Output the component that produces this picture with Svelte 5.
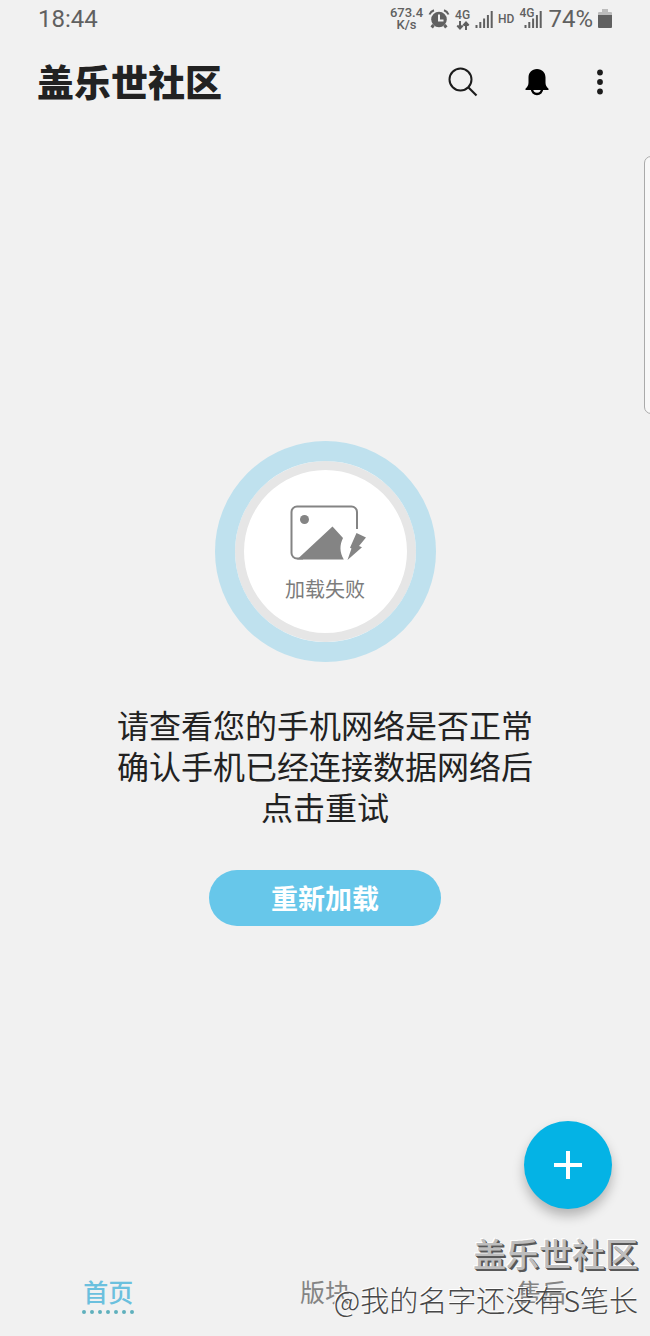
<script>
    const tabs = [
        { id: "home", label: "首页" },
        { id: "boards", label: "版块" },
        { id: "service", label: "售后" },
    ];

    const message = [
        "请查看您的手机网络是否正常",
        "确认手机已经连接数据网络后",
        "点击重试",
    ];

    let currentTab = $state("home");

    function selectTab(event, id) {
        event.preventDefault();
        currentTab = id;
    }
</script>

{#snippet signal()}
    <svg class="signal" width="18" height="18" viewBox="0 0 18 18" aria-hidden="true">
        <path d="M1.5 15v3M5.3 12v6M9.1 8.5v9.5M12.9 5v13M16.7 1v17" stroke="currentColor" stroke-width="2" />
    </svg>
{/snippet}

<div class="screen">
    <div class="status-bar">
        <time>18:44</time>
        <div class="status-icons">
            <span class="speed">673.4<br />K/s</span>
            <svg class="alarm" width="22" height="20" viewBox="0 0 22 20" aria-hidden="true">
                <circle cx="11" cy="10.5" r="7.8" fill="currentColor" />
                <path d="M5.5 16l-1.8 2.5M16.5 16l1.8 2.5" stroke="currentColor" stroke-width="3" />
                <path d="M1.5 5.5C2.3 3.5 3.7 2 6 1.2M20.5 5.5C19.7 3.5 18.3 2 16 1.2" stroke="currentColor" stroke-width="2" fill="none" />
                <path d="M11 5.5v6h4.5" stroke="#f1f1f1" stroke-width="2" fill="none" />
            </svg>
            <span class="network">
                <span class="generation">4G</span>
                <svg width="14" height="9" viewBox="0 0 13 9" aria-hidden="true">
                    <path d="M3.5 0v7M.8 4.5l2.700 3 2.700-3M9.500 9V2M6.800 4.500l2.700-3 2.700 3" stroke="currentColor" stroke-width="2" fill="none" />
                </svg>
            </span>
            {@render signal()}
            <span class="hd">HD</span>
            <span class="second-sim">
                <span class="generation">4G</span>
                {@render signal()}
            </span>
            <span class="percent">74%</span>
            <svg width="14" height="20" viewBox="0 0 14 20" aria-hidden="true">
                <path d="M4 0h6v3h3a1 1 0 0 1 1 1v4H0V4a1 1 0 0 1 1-1h3z" fill="#bcbcbc" />
                <path d="M0 6h14v12a1 1 0 0 1-1 1H1a1 1 0 0 1-1-1z" fill="currentColor" />
            </svg>
        </div>
    </div>

    <header>
        <h1>盖乐世社区</h1>
        <div class="actions">
            <button aria-label="搜索">
                <svg width="30" height="30" viewBox="0 0 30 30">
                    <circle cx="12.5" cy="12.5" r="11" fill="none" stroke="#1c1c1c" stroke-width="2" />
                    <path d="M20.5 20.5l8 8" stroke="#1c1c1c" stroke-width="2.2" />
                </svg>
            </button>
            <button aria-label="通知">
                <svg width="24" height="28" viewBox="0 0 24 28">
                    <circle cx="12" cy="21" r="5" fill="none" stroke="#000" stroke-width="2.5" />
                    <path d="M12 1c5.200 0 8.500 3.600 8.500 8.500v5c0 2.500.8 4 3 6.200V22H.5v-1.300c2.200-2.200 3-3.700 3-6.200v-5C3.500 4.600 6.800 1 12 1z" fill="#000" />
                </svg>
            </button>
            <button aria-label="更多">
                <svg width="8" height="26" viewBox="0 0 8 26">
                    <circle cx="4" cy="3.5" r="2.9" fill="#1c1c1c" />
                    <circle cx="4" cy="13" r="2.9" fill="#1c1c1c" />
                    <circle cx="4" cy="22.5" r="2.9" fill="#1c1c1c" />
                </svg>
            </button>
        </div>
    </header>

    <main>
        <div class="failure">
            <svg width="84" height="58" viewBox="-6 0 84 58" aria-hidden="true">
                <path d="M68 25V8a5.500 5.500 0 0 0-5.500-5.500H8A5.500 5.500 0 0 0 2.500 8v41A5.500 5.500 0 0 0 8 54.500h6" fill="none" stroke="#848484" stroke-width="2" />
                <circle cx="15.5" cy="15.5" r="4.500" fill="#848484" />
                <path d="M8 55.500L43.500 22.500 54 34c-3.500 7-3.500 14 .8 21.500z" fill="#848484" />
                <path d="M67.500 29L77 33.500 70 42l3 1.300L58.500 56l4-11.500-1.500-.7z" fill="#848484" />
            </svg>
            <span>加载失败</span>
        </div>
        <p class="message">
            {#each message as line}
                <span>{line}</span>
            {/each}
        </p>
        <button class="reload">重新加载</button>
    </main>

    <nav>
        {#each tabs as tab}
            <a
                href="#{tab.id}"
                class:active={currentTab === tab.id}
                onclick={(event) => selectTab(event, tab.id)}
            >
                <span>{tab.label}</span>
                <svg width="52" height="4" viewBox="0 0 52 4" aria-hidden="true">
                    <path d="M2 2h49" stroke="#5fb0bd" stroke-width="4" stroke-linecap="round" stroke-dasharray="0 8" />
                </svg>
            </a>
        {/each}
    </nav>

    <div class="edge-handle"></div>

    <button class="compose" aria-label="发帖">
        <svg width="28" height="28" viewBox="0 0 28 28">
            <path d="M14 0v28M0 14h28" stroke="#fff" stroke-width="4" />
        </svg>
    </button>

    <div class="watermark">
        <strong>盖乐世社区</strong>
        <span>@我的名字还没有S笔长</span>
    </div>
</div>

<style>
    :global(body) {
        margin: 0;
        background: #f1f1f1;
    }

    .screen {
        position: relative;
        display: flex;
        flex-direction: column;
        min-height: 100vh;
        overflow: hidden;
        background: #f1f1f1;
        color: #222;
        font-family: Roboto, "Noto Sans CJK SC", sans-serif;
    }

    button {
        display: flex;
        align-items: center;
        justify-content: center;
        padding: 0;
        border: none;
        background: none;
        font-family: inherit;
        cursor: pointer;
    }

    .status-bar {
        display: flex;
        align-items: center;
        justify-content: space-between;
        height: 38px;
        padding: 0 38px;
        color: #606060;
        font-size: 24px;
    }

    .status-icons {
        display: flex;
        align-items: center;
        gap: 5px;
    }

    .speed,
    .generation,
    .hd {
        font-size: 12px;
        font-weight: 500;
        line-height: 12px;
        text-align: center;
    }

    .speed {
        font-size: 13px;
    }

    .network {
        display: flex;
        flex-direction: column;
        align-items: center;
    }

    .second-sim {
        position: relative;
        display: flex;
        padding-left: 5px;
    }

    .second-sim .generation {
        position: absolute;
        top: -3px;
        left: 0;
    }

    .signal {
        display: block;
    }

    .percent {
        padding-left: 1px;
    }

    header {
        display: flex;
        align-items: center;
        justify-content: space-between;
        height: 88px;
        padding: 0 46px 0 37px;
    }

    h1 {
        margin: 0;
        padding-top: 6px;
        font-size: 37px;
        font-weight: 900;
        line-height: 48px;
    }

    .actions {
        display: flex;
        align-items: center;
        gap: 47px;
    }

    main {
        display: flex;
        flex: 1;
        flex-direction: column;
        align-items: center;
        justify-content: center;
    }

    .failure {
        display: flex;
        flex-direction: column;
        align-items: center;
        justify-content: center;
        gap: 14px;
        box-sizing: border-box;
        width: 221px;
        height: 221px;
        padding-top: 6px;
        border: 20px solid #bfe1ee;
        border-radius: 50%;
        background: #fff;
        box-shadow: inset 0 0 0 9px #e6e6e6;
        color: #7c7c7c;
        font-size: 20px;
        line-height: 28px;
    }

    .message {
        margin: 45px 0 40px;
        font-size: 32px;
        line-height: 41px;
        text-align: center;
    }

    .message span {
        display: block;
    }

    .reload {
        width: 232px;
        height: 56px;
        border-radius: 28px;
        background: #67c7ea;
        color: #fff;
        font-size: 27px;
        font-weight: 700;
    }

    nav {
        display: flex;
        height: 80px;
        padding-top: 16px;
    }

    nav a {
        display: flex;
        flex: 1;
        flex-direction: column;
        align-items: center;
        justify-content: center;
        color: #848484;
        font-size: 25px;
        line-height: 32px;
        text-decoration: none;
    }

    nav a svg {
        visibility: hidden;
    }

    nav a.active {
        color: #6bc0de;
        font-weight: 500;
    }

    nav a.active svg {
        visibility: visible;
    }

    .edge-handle {
        position: absolute;
        top: 156px;
        right: -8px;
        box-sizing: border-box;
        width: 14px;
        height: 258px;
        border: 1px solid #aaa;
        border-radius: 8px;
        background: #f8f8f8;
    }

    .compose {
        position: absolute;
        right: 38px;
        bottom: 127px;
        width: 88px;
        height: 88px;
        border-radius: 50%;
        background: #04b3e5;
        box-shadow: 0 7px 12px rgba(0, 0, 0, 0.25);
    }

    .watermark {
        position: absolute;
        right: 12px;
        bottom: 16px;
        display: flex;
        flex-direction: column;
        align-items: flex-end;
        pointer-events: none;
    }

    .watermark strong {
        color: #bebebe;
        font-size: 33px;
        font-weight: 500;
        line-height: 44px;
        text-shadow: 1px 1px 0 #585858, 2px 2px 0 #585858, -1px -1px 0 #fff;
    }

    .watermark span {
        color: #484848;
        font-family: "Noto Sans CJK SC", sans-serif;
        font-size: 29px;
        font-weight: 300;
        line-height: 42px;
        text-shadow: -1px -1px 0 #fff;
    }
</style>
